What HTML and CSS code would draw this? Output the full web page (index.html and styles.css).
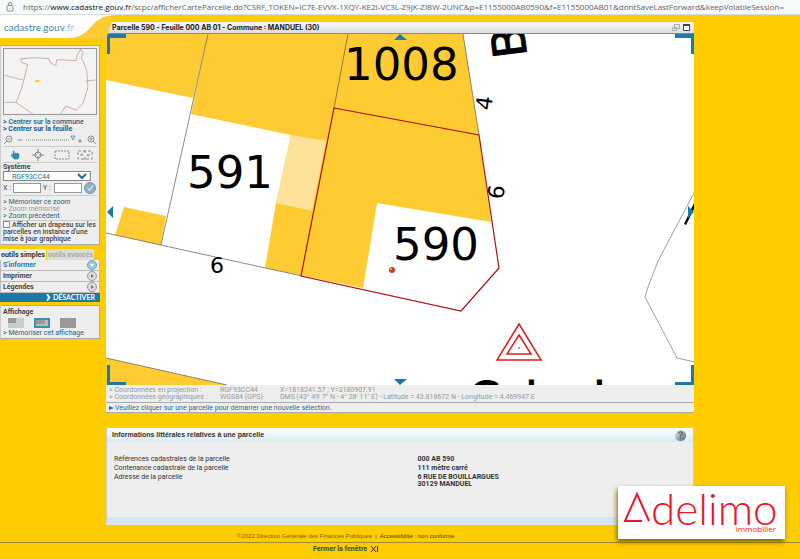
FILE: index.html
```html
<!DOCTYPE html>
<html lang="fr">
<head>
<meta charset="utf-8">
<title>cadastre.gouv.fr</title>
<link rel="stylesheet" href="styles.css">
</head>
<body>
<header class="browser">
  <svg class="lock" viewBox="0 0 8 10" aria-hidden="true"><rect x="1" y="3.5" width="6" height="5.5" rx="1"/><path d="M2.5 3.5V2a1.5 1.5 0 0 1 3 0v1.5M4 5.7v1"/></svg>
  <span class="url">https://<b>www.cadastre.gouv.fr</b>/scpc/afficherCarteParcelle.do?CSRF_TOKEN=IC7E-EVVX-1XQY-KE2I-VC3L-Z9JK-ZIBW-2UNC&amp;p=E1155000AB0590&amp;f=E1155000AB01&amp;dontSaveLastForward&amp;keepVolatileSession=</span>
</header>
<div class="layout">
  <aside class="side">
    <div class="brand">
      <svg class="swoosh" viewBox="0 0 116 24" aria-hidden="true"><path fill="#ffcb33" d="M60 24C88 22 84 2 114 1L106 24z"/><path fill="#fff" d="M0 0H116C86 1 96 23 66 23H0z"/></svg>
      <span class="brand-name">cadastre<i>.</i>gouv<i>.fr</i></span>
    </div>
    <section class="panel nav">
      <svg class="mini" viewBox="0 0 94 67" role="img" aria-label="Carte de la commune">
        <g fill="none" stroke="#cfae9f" stroke-width="1">
          <path d="M17 10l15-1 14 1 1 4 6 3 1-6 20 1 1-6 4-6 2 4-2 5 3 5 3 9 1 17-5 16-7 7-11-4-5 8-5 2H32L12 55l6-15 6-24-6-2z"/>
          <path d="M0 27l19 5M0 55h12M84 33l10-1"/>
        </g>
        <rect x="32" y="32" width="4" height="2" fill="#fc0"/>
      </svg>
      <a class="lk medium" href="#">&gt; Centrer sur la commune</a>
      <a class="lk strong" href="#">&gt; Centrer sur la feuille</a>
      <div class="zoombar">
        <button aria-label="Zoom arrière"><svg viewBox="0 0 10 10"><circle cx="6" cy="4" r="3"/><path d="M4 6L1 9M4.5 4h3"/></svg></button>
        <svg class="track" viewBox="0 0 70 12" aria-hidden="true"><path d="M3 6h4M63 7h4M65 5v4"/><path d="M11 6h43" stroke-dasharray="1 1"/><path class="knob" d="M56 2h4l-2 4z"/></svg>
        <button aria-label="Zoom avant"><svg viewBox="0 0 10 10"><circle cx="4" cy="4" r="3"/><path d="M6 6l3 3M2.500 4h3M4 2.500v3"/></svg></button>
      </div>
      <div class="tools">
        <button aria-label="Déplacer"><svg viewBox="0 0 14 12"><path fill="#2b8fae" stroke="#2b8fae" stroke-width=".6" d="M5 6V2h1v3h1V4h1v1h1V4h1v1h1v3L10 10H6L3 6l1-.5z"/></svg></button>
        <button aria-label="Recentrer"><svg viewBox="0 0 14 12"><circle cx="7" cy="6" r="3"/><path d="M7 0v5M7 7v5M1 6h5M8 6h5"/></svg></button>
        <button aria-label="Zoom rectangle"><svg viewBox="0 0 18 12"><path stroke-dasharray="2 1" d="M2 2h14v8H2z"/></svg></button>
        <button aria-label="Vue étendue"><svg viewBox="0 0 18 12"><path stroke-dasharray="3 2" d="M2 2h14v8H2z"/><path d="M4 6h3L5.500 4.500M14 6h-3l1.500 1.500M9 1v3M9 8v3"/></svg></button>
      </div>
      <label class="cap" for="sys">Système</label>
      <select id="sys" class="sys"><option>RGF93CC44</option></select>
      <div class="xy">
        <label for="x">X :</label><input id="x" type="text">
        <label for="y">Y :</label><input id="y" type="text">
        <button class="ok" aria-label="Valider"><svg viewBox="0 0 12 12"><circle cx="6" cy="6" r="5.500" fill="#8fb0c6" stroke="#7795a8"/><path d="M3.500 6l2 2.500L9 3.500" stroke="#fff"/></svg></button>
      </div>
      <a class="lk top" href="#">&gt; Mémoriser ce zoom</a>
      <span class="lk off">&gt; Zoom mémorisé</span>
      <a class="lk" href="#">&gt; Zoom précédent</a>
      <label class="flag"><input type="checkbox">Afficher un drapeau sur les parcelles en instance d'une mise à jour graphique</label>
    </section>
    <section class="menu">
      <div class="tabs"><button class="on">outils simples</button><button>outils avancés</button></div>
      <button class="item cur">S'informer<svg viewBox="0 0 10 10"><circle cx="5" cy="5" r="4.500"/><path d="M3 4h4L5 7z"/></svg></button>
      <button class="item">Imprimer<svg viewBox="0 0 10 10"><circle cx="5" cy="5" r="4.500"/><path d="M4 3v4l3-2z"/></svg></button>
      <button class="item">Légendes<svg viewBox="0 0 10 10"><circle cx="5" cy="5" r="4.500"/><path d="M4 3v4l3-2z"/></svg></button>
      <button class="stop"><svg viewBox="0 0 6 8" aria-hidden="true"><path d="M1 0h2l3 4-3 4H1l2-4z" fill="#fff"/></svg>DÉSACTIVER</button>
    </section>
    <section class="panel view">
      <h2>Affichage</h2>
      <div class="modes">
        <button aria-label="Petite carte"><svg viewBox="0 0 16 10"><path fill="#ccc" d="M0 0h16v10H0z"/><path fill="#999" d="M0 0h8v5H0z"/></svg></button>
        <button aria-label="Carte moyenne"><svg viewBox="0 0 16 10"><path fill="#bbb" stroke="#3b8fb8" stroke-width="2" d="M1 1h14v8H1z"/><path fill="#999" d="M2 2h9v4H2z"/></svg></button>
        <button aria-label="Grande carte"><svg viewBox="0 0 16 10"><path fill="#999" d="M0 0h16v10H0z"/></svg></button>
      </div>
      <a class="lk" href="#">&gt; Mémoriser cet affichage</a>
    </section>
  </aside>
  <main class="main">
    <div class="titlebar">
      <h1>Parcelle 590 - Feuille 000 AB 01 - Commune : MANDUEL (30)</h1>
      <button aria-label="Réduire"><svg viewBox="0 0 9 9"><path fill="none" stroke="#aaa" d="M3.500 1.500h5v4h-5zM1.500 4.500h4v3h-4z"/></svg></button>
      <button aria-label="Agrandir"><svg viewBox="0 0 9 9"><path fill="#fff" stroke="#444" d="M1.500 1.500h6v6h-6z"/><path fill="#444" d="M1 1h7v2H1z"/></svg></button>
    </div>
    <svg class="map" viewBox="106 34 588 351" role="img" aria-label="Plan cadastral">
      <path fill="#fff" d="M106 34h589v351H106z"/>
      <g fill="#ffcb33">
        <path d="M106 34h102l-15 64-87-18z"/>
        <path d="M208 34h255l16 101 12 87-114-19-14 85-98-20 11-65 15-68-100-21z"/>
        <path d="M124 207l42 9-5 29-46-10z"/>
        <path d="M106 358l121 27H106z"/>
      </g>
      <path fill="#ffe299" d="M291 135l35 6-14 70-36-8z"/>
      <g fill="none" stroke="#555" stroke-width=".8">
        <path d="M208 34l-47 211M348 34l-14 74M463 34l16 101M106 233l196 43M106 358l121 27" stroke-opacity=".85"/>
        <path d="M695 191l-37 70-10 26-3 10 32 61 18 4" stroke-opacity=".7"/>
      </g>
      <path fill="none" stroke="#a81414" stroke-width="1.200" d="M334 108l145 27 20 133-38 43-160-35z"/>
      <g class="parcels">
        <text x="187" y="188">591</text>
        <text x="344" y="80">1008</text>
        <text x="393" y="260">590</text>
      </g>
      <g class="numbers">
        <text x="210" y="273">6</text>
        <text transform="translate(491 111) rotate(-82)">4</text>
        <text transform="translate(503 200) rotate(-82)">6</text>
      </g>
      <g class="streets">
        <text transform="translate(527 56) rotate(-97)">B</text>
        <text x="468" y="415">C</text><text x="525" y="415">l</text><text x="593" y="415">l</text>
        <path d="M684 224l2 1 9-18v-6z"/>
      </g>
      <g fill="none" stroke="#e31b1b" stroke-width="1.500"><path d="M519 324l22 36h-44zM519 335l12 19h-24z"/><path d="M518 348h2" stroke-width="1"/></g>
      <circle cx="392" cy="270" r="3" fill="#c8431b"/><circle cx="391" cy="269" r="1" fill="#ffb08a"/>
      <g fill="#1c7aa8">
        <path d="M107 34h19v4h-16v16h-3zM675 34h19v20h-3V38h-16zM107 385v-20h3v17h16v3zM694 385v-20h-3v17h-16v3z"/>
        <path d="M394 40l6-6 7 6zM394 379h13l-7 6zM113 206v12l-6-6zM688 206v12l6-6z"/>
      </g>
    </svg>
    <dl class="coords">
      <dt>&gt; Coordonnées en projection :</dt><dd>RGF93CC44</dd><dd>X=1818241.57 ; Y=3180907.91</dd>
      <dt>&gt; Coordonnées géographiques :</dt><dd>WGS84 (GPS)</dd><dd>DMS (43° 49' 7" N - 4° 28' 11" E) - Latitude = 43.818672 N - Longitude = 4.469947 E</dd>
    </dl>
    <p class="hint"><svg viewBox="0 0 5 6" aria-hidden="true"><path d="M0 1v4l5-2z"/></svg>Veuillez cliquer sur une parcelle pour démarrer une nouvelle sélection.</p>
    <section class="info">
      <header><h2>Informations littérales relatives à une parcelle</h2>
        <button aria-label="Aide"><svg viewBox="0 0 14 14"><defs><linearGradient id="g" x2="1" y2="1"><stop offset="0" stop-color="#eef4f7"/><stop offset="1" stop-color="#496274"/></linearGradient></defs><circle cx="7" cy="7" r="6" fill="url(#g)"/><path d="M5 5c0-3 5-2 4 0L7 7v1M7 9v1.500" fill="none" stroke="#50697a" stroke-width="1.400"/></svg></button>
      </header>
      <table>
        <tr><th>Références cadastrales de la parcelle</th><td>000 AB 590</td></tr>
        <tr><th>Contenance cadastrale de la parcelle</th><td>111 mètre carré</td></tr>
        <tr><th>Adresse de la parcelle</th><td>6 RUE DE BOUILLARGUES<br>30129 MANDUEL</td></tr>
      </table>
    </section>
  </main>
</div>
<footer class="foot">
  <p>©2022 Direction Générale des Finances Publiques &nbsp;|&nbsp; <a href="#">Accessibilité : non conforme</a></p>
  <div class="close"><button>Fermer la fenêtre<svg viewBox="0 0 8 8" aria-hidden="true"><path d="M1 1l5 6M6 1L1 7M7.500 1v6" /></svg></button></div>
</footer>
<div class="agency">
  <div class="agency-name"><svg viewBox="0 0 28 31" role="img" aria-label="A"><path d="M26 29L14 2 2 29h17"/></svg><span>delimo</span></div>
  <div class="agency-sub">immobilier</div>
</div>
</body>
</html>
```
FILE: styles.css
```css
* { box-sizing: border-box; }
body { margin: 0; position: relative; background: #fc0; font: 7px/8px Roboto, Arial, sans-serif; color: #444; }
h1, h2, p, dl, dd { margin: 0; }
button { font: inherit; color: inherit; background: none; border: 0; padding: 0; }
svg { display: block; }
a { color: inherit; text-decoration: none; }

.browser { display: flex; align-items: center; height: 15px; padding: 0 6px; gap: 9px; background: #f7fafb; border-bottom: 1px solid #d5dcd9; }
.lock { width: 8px; height: 10px; flex: none; fill: none; stroke: #777; stroke-width: .8; }
.url { font: 8px/12px "Open Sans", sans-serif; color: #666; white-space: nowrap; }
.url b { font-weight: 400; color: #111; }

.layout { display: grid; grid-template-columns: 100px minmax(0, 1fr); column-gap: 6px; padding-right: 106px; }
.brand { position: relative; height: 24px; }
.swoosh { position: absolute; left: 0; top: 0; width: 116px; height: 24px; }
.brand-name { position: relative; padding-left: 4px; font: 10px/25px Lato, sans-serif; color: #4a8a9e; }
.brand-name i { font-style: normal; color: #9fc0c8; }

.panel { background: #eee; border: 1px solid #aaa; border-left-color: #ccc; padding: 2px; }
.nav { margin-top: 6px; padding-bottom: 1px; }
.mini { width: 94px; height: 67px; border: 1px solid #999; background: #f3f3f3; margin-bottom: 4px; }
.lk { display: block; color: #2a5b80; line-height: 7px; }
.medium { font-weight: 500; }
.strong { font-weight: 700; }
.off { color: #999; }
.zoombar { display: flex; align-items: center; height: 13px; margin-top: 1px; border-bottom: 1px solid #ccc; }
.zoombar svg, .tools svg { fill: none; stroke: #777; stroke-width: .8; }
.zoombar button svg { width: 10px; height: 10px; }
.zoombar .track { flex: 1; height: 12px; }
.zoombar .knob { stroke: #2b8fae; }
.tools { display: grid; grid-template-columns: 1fr 1fr 1fr 1fr; justify-items: center; align-items: center; height: 16px; border-bottom: 1px solid #ccc; }
.tools svg { height: 12px; }
.cap { display: block; font-weight: 700; }
.sys { display: block; width: 88px; height: 10px; font: 7px/8px Roboto, Arial, sans-serif; color: #1b6d8e; background: #fff; border: 1px solid #888; padding: 0 4px; }
.xy { display: grid; grid-template-columns: 8px 28px 9px 28px 12px; column-gap: 2px; align-items: center; height: 15px; border-bottom: 1px solid #ccc; white-space: nowrap; }
.xy input { width: 100%; height: 10px; border: 1px solid #999; padding: 0; font: inherit; }
.ok svg { width: 12px; height: 12px; fill: none; }
.top { margin-top: 3px; }
.flag { display: block; border-top: 1px solid #ccc; font-weight: 500; line-height: 7px; }
.flag input { appearance: none; width: 7px; height: 7px; margin: 0 2px 0 0; border: 1px solid #888; background: #fff; vertical-align: -1px; }

.menu { margin-top: 4px; font-weight: 700; }
.tabs { display: flex; gap: 1px; height: 11px; }
.tabs button { background: #ddd; color: #aaa; padding: 0 1px; font-weight: 700; white-space: nowrap; }
.tabs .on { background: #eee; color: #333; }
.item { display: flex; width: 100%; justify-content: space-between; align-items: center; height: 11px; background: #eee; border: 1px solid #bbb; border-width: 0 1px 1px; padding: 0 2px; font-weight: 700; }
.item svg { width: 10px; height: 10px; }
.item circle { fill: #ddd; stroke: #999; }
.item path { fill: #777; }
.cur { color: #2480a8; }
.cur circle { fill: #9cc9dc; stroke: #6fa5bc; }
.cur path { fill: #fff; }
.stop { display: flex; width: 100%; height: 9px; align-items: center; justify-content: flex-end; gap: 2px; padding-right: 5px; background: #1c7aa8; color: #fff; font: 700 7px/9px Lato, sans-serif; }
.stop svg { width: 6px; height: 7px; }
.view { margin-top: 3px; height: 34px; }
.view h2 { font-size: 7px; line-height: 8px; }
.modes { display: grid; grid-template-columns: 1fr 1fr 1fr; justify-items: center; margin: 2px 16px 1px 0; padding-bottom: 1px; }
.modes svg { width: 16px; height: 10px; }

.main { padding-top: 7px; }
.titlebar { display: flex; align-items: center; height: 12px; padding: 0 3px 0 6px; gap: 2px; background: linear-gradient(#f7f7f7, #ddd); border-bottom: 1px solid #888; border-radius: 2px 2px 0 0; }
.titlebar h1 { flex: 1; font: 700 7px/10px Inter, sans-serif; color: #222; }
.titlebar svg { width: 9px; height: 9px; }
.map { width: 100%; height: auto; }
.parcels { font: 45px "DejaVu Sans", sans-serif; fill: #000; }
.numbers { font: 22px "DejaVu Sans", sans-serif; fill: #000; }
.streets { font: 46px "DejaVu Sans", sans-serif; fill: #000; }
.streets text { stroke: #000; stroke-width: 1; }
.coords { display: grid; grid-template-columns: 111px 60px 1fr; padding: 2px 3px 1px; background: #eee; color: #999; line-height: 7px; }
.hint { display: flex; align-items: center; gap: 1px; height: 11px; padding-left: 3px; background: #eee; border: 1px solid #aaa; border-width: 1px 0; color: #2a6f96; }
.hint svg { width: 5px; height: 6px; fill: #2a6f96; }
.info { margin-top: 14px; min-height: 98px; background: #eee; border: 1px solid #b9cdd3; border-bottom: 8px solid #d8e7ee; }
.info header { display: flex; align-items: center; justify-content: space-between; height: 14px; padding: 0 6px 0 5px; background: linear-gradient(#fff, #dbeaf1); }
.info h2 { font: 700 7px/8px "Liberation Sans", Arial, sans-serif; color: #333; }
.info header svg { width: 13px; height: 13px; }
.info table { width: 100%; margin-top: 14px; border-collapse: collapse; line-height: 7px; color: #333; }
.info th { width: 53%; padding: 0 0 2px 7px; text-align: left; vertical-align: top; font-weight: 400; }
.info td { padding: 0 0 2px; font-weight: 700; }

.foot { margin-top: 6px; }
.foot p { padding: 1px 0 2px 237px; font-size: 6px; font-family: "Liberation Sans", Arial, sans-serif; color: #7a6420; }
.foot a { color: #554510; }
.close { border-top: 1px solid #a08a30; padding: 2px 0 7px 313px; }
.close button { display: flex; gap: 3px; font-weight: 700; }
.close svg { width: 8px; height: 8px; stroke: #333; }

.agency { position: absolute; right: 15px; bottom: 21px; width: 167px; height: 53px; padding: 6px 5px; background: #fff; box-shadow: -1px 3px 5px #7a6200; color: #f01428; }
.agency-name { display: flex; height: 32px; }
.agency-name svg { width: 28px; height: 31px; fill: none; stroke: #f01428; stroke-width: 2; }
.agency-name span { font: 300 44px/32px Lato, sans-serif; }
.agency-sub { text-align: right; padding-right: 4px; font: 8px/10px "Open Sans", sans-serif; }
```
